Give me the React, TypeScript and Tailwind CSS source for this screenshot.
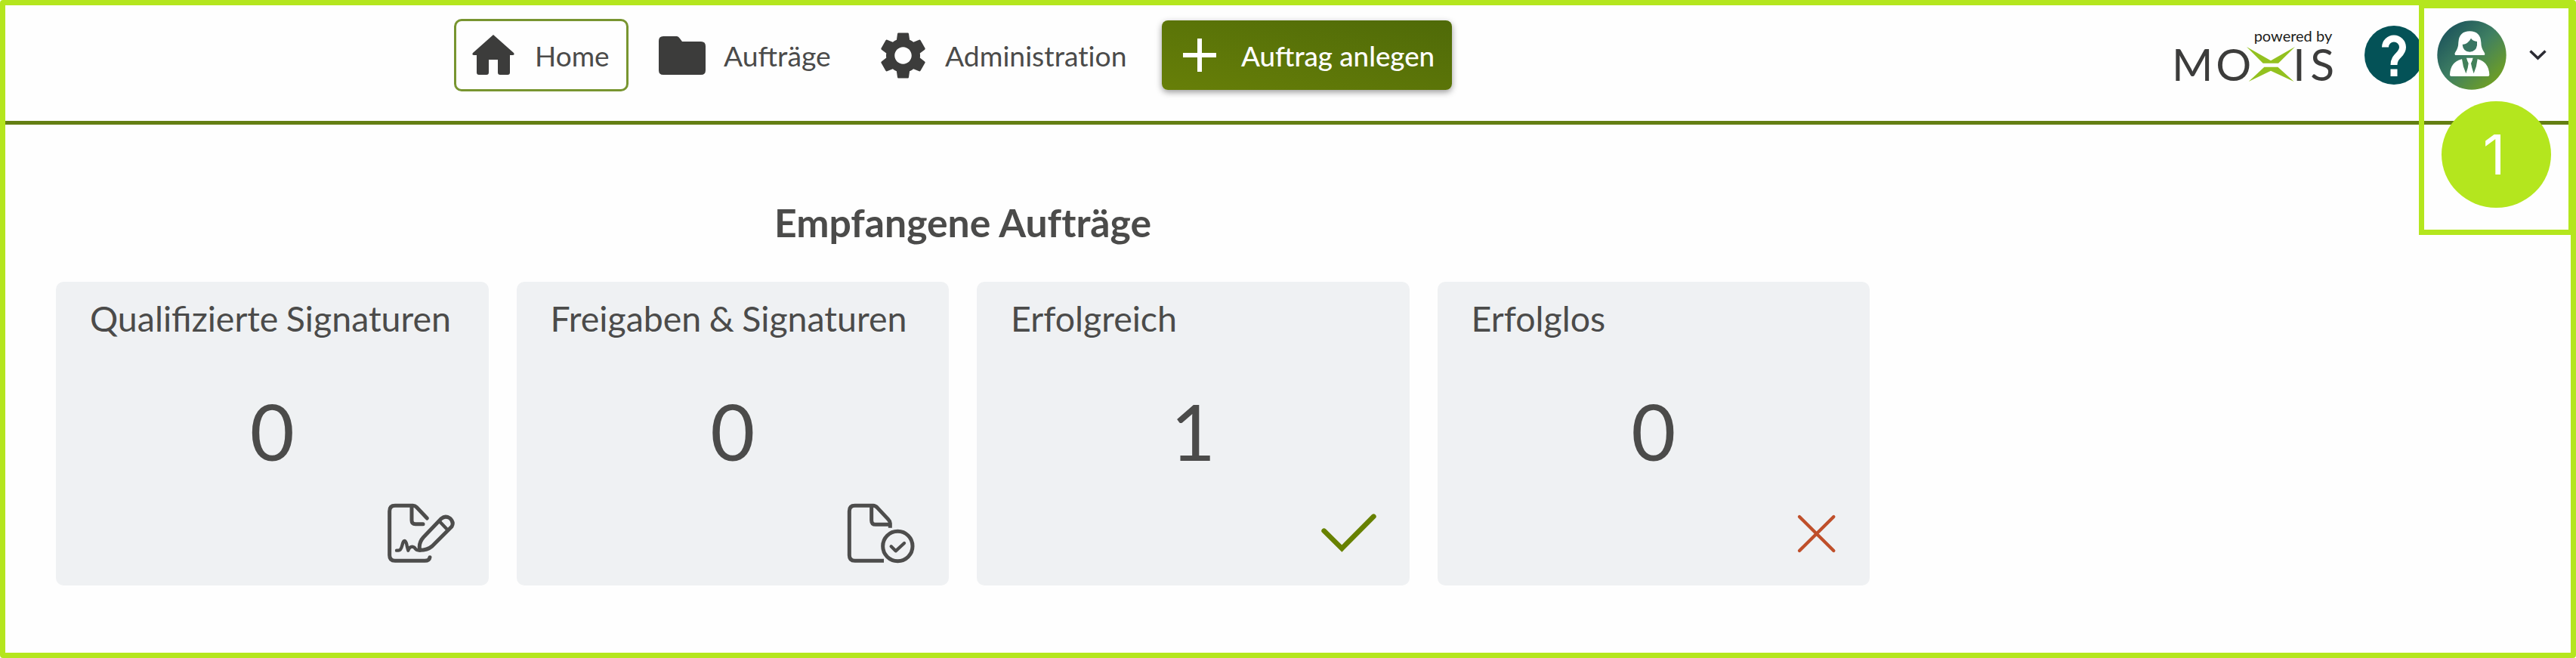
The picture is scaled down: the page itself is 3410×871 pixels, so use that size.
import React from 'react';
import { MdSettings } from 'react-icons/md';

interface StatusCard {
  title: string;
  count: number;
  icon: React.ReactNode;
}

const SignIcon = () => (
  <svg width="100" height="83" viewBox="70 75 300 249" fill="none" stroke="#4d4d4c" strokeWidth="15" strokeLinecap="round" strokeLinejoin="round">
    <path d="M254 138 L212 94 Q206 88 198 88 H127 Q105 88 105 110 V285 Q105 307 127 307 H245 Q263 307 265 293" />
    <path d="M193 92 V146 Q193 161 208 161 H238" />
    <path d="M133 266 H140 Q150 266 155 246 Q160 225 166 228 Q172 232 175 252 L179 266 Q184 251 195 251 Q204 252 208 260 Q212 266 225 266" strokeWidth="13" />
    <path d="M225 265 Q219 236 240 213 L311 139 Q326 126 345 138 Q362 154 352 171 L274 249 Q255 265 225 265 Z" />
    <path d="M303 150 L335 184" strokeWidth="13" />
  </svg>
);

const ApprovalIcon = () => (
  <svg width="100" height="83" viewBox="99 75 300 249" fill="none" stroke="#4d4d4c" strokeWidth="15" strokeLinejoin="round">
    <path d="M295 176 V158 Q295 150 288 143 L245 97 Q236 88 228 88 H155 Q133 88 133 110 V285 Q133 307 155 307 H270" />
    <path d="M221 92 V146 Q221 163 238 163 H293" />
    <circle cx="325" cy="249" r="59" />
    <path d="M299 250 L317 268 L351 237" strokeLinecap="round" strokeWidth="13" />
  </svg>
);

const SuccessIcon = () => (
  <svg width="100" height="83" viewBox="8 75 300 249" fill="none" stroke="#678100" strokeWidth="20" strokeLinecap="round">
    <path d="M97 188 L168 258 L294 131" />
  </svg>
);

const FailedIcon = () => (
  <svg width="100" height="83" viewBox="-23 75 300 249" fill="none" stroke="#bf4f2a" strokeWidth="13" strokeLinecap="round">
    <path d="M127 132 L263 267 M263 132 L127 267" />
  </svg>
);

const Logo = () => (
  <svg width="220" height="80" viewBox="45 39 660 240" className="overflow-visible font-[Lato,sans-serif]">
    <text x="371" y="105" fontSize="60" fill="#1d1d1b">powered by</text>
    <g fontSize="176" fill="#3c3c3b">
      <text x="45 220" y="260">MO</text>
      <text x="526 595" y="260">IS</text>
    </g>
    <path d="M342 126 L438 181 L534 126 L468 191 H407 Z" fill="#93c11f" />
    <path d="M350 264 L412 206 H466 L530 264 L438 221 Z" fill="#93c11f" />
  </svg>
);

const Avatar = () => (
  <svg width="92" height="92" viewBox="109 81 276 276">
    <defs>
      <linearGradient id="avatar" x1="0.1" y1="0.1" x2="0.87" y2="0.87">
        <stop offset="0" stopColor="#1c535c" />
        <stop offset="0.5" stopColor="#3f7f62" />
        <stop offset="1" stopColor="#6f9f24" />
      </linearGradient>
    </defs>
    <circle cx="247" cy="219" r="137" fill="url(#avatar)" />
    <path d="M181 219 Q177 213 182 207 Q194 190 194 168 Q197 124 239 124 Q281 124 284 168 Q284 190 296 207 Q301 213 298 219 Z" fill="#fff" />
    <path d="M210 177 Q233 174 244 152 Q252 163 268 165 V180 Q264 205 239 206 Q212 205 210 177 Z" fill="#397663" />
    <path d="M160 297 Q162 246 207 235 H271 Q315 247 317 297 Q317 303 311 303 H166 Q160 303 160 297 Z" fill="#fff" />
    <path d="M208 234 H228 L234 252 L231 270 L224 292 Q211 264 208 234 Z M270 234 H250 L244 252 L248 270 L255 292 Q267 264 270 234 Z" fill="#43805a" />
    <path d="M226 230 H252 L246 247 H232 Z" fill="#fff" />
  </svg>
);

const cards: StatusCard[] = [
  { title: 'Qualifizierte Signaturen', count: 0, icon: <SignIcon /> },
  { title: 'Freigaben & Signaturen', count: 0, icon: <ApprovalIcon /> },
  { title: 'Erfolgreich', count: 1, icon: <SuccessIcon /> },
  { title: 'Erfolglos', count: 0, icon: <FailedIcon /> },
];

export default function App() {
  return (
    <div className="relative w-[3410px] h-[871px] overflow-hidden rounded-[4px] border-[7px] border-[#b4e61e] bg-[#fefefe] font-[Lato,sans-serif] text-[#4b4b4a]">
      {/* Header */}
      <header className="flex h-[158px] items-center border-b-[5px] border-[#647f13] pb-[21px] pl-[594px] pr-[32px]">
        <nav className="flex items-center text-[37px] leading-[48px] whitespace-nowrap">
          <a className="flex h-[96px] w-[231px] items-center rounded-[10px] border-[3px] border-[#789530] pl-[21px]">
            <svg width="56" height="54" viewBox="0 0 56 54" fill="#3c3c3b">
              <path d="M28 0 L55 24 Q57 27 53 27 H50 V50 Q50 53 47 53 H37 Q34 53 34 50 V33 H22 V50 Q22 53 19 53 H9 Q6 53 6 50 V27 H3 Q-1 27 1 24 Z" />
            </svg>
            <span className="ml-[27px] pt-[2px]">Home</span>
          </a>
          <a className="ml-[40px] flex w-[286px] items-center">
            <svg width="62" height="51" viewBox="0 0 62 51" fill="#3c3c3b">
              <path d="M6 0 H24 Q26 0 28 3 L31 7 H56 Q62 7 62 13 V45 Q62 51 56 51 H6 Q0 51 0 45 V6 Q0 0 6 0 Z" />
            </svg>
            <span className="ml-[24px] pt-[2px] text-[37.3px]">Aufträge</span>
          </a>
          <a className="flex w-[380px] items-center">
            <MdSettings className="size-[75px] shrink-0 text-[#3c3c3b]" />
            <span className="ml-[18px] pt-[2px] text-[37.3px] [font-variant-ligatures:none]">Administration</span>
          </a>
          <button className="flex h-[92px] w-[384px] items-center rounded-[8px] bg-linear-to-tr from-[#677f08] to-[#4f6a08] pl-[28px] text-[36.7px] font-medium text-white shadow-[0_3px_8px_rgba(0,0,0,0.4)]">
            <svg width="44" height="44" viewBox="0 0 44 44" stroke="#fff" strokeWidth="6">
              <path d="M22 0 V44 M0 22 H44" />
            </svg>
            <span className="ml-[33px] pt-[2px]">Auftrag anlegen</span>
          </button>
        </nav>

        <div className="ml-auto flex items-center">
          <Logo />
          <svg className="ml-[35px]" width="78" height="78" viewBox="0 0 78 78">
            <circle cx="39" cy="39" r="39" fill="#045257" />
            <path d="M27.5 28.5 A11.5 11.5 0 0 1 50.5 28.5 C50.5 39 39 39 39 52" fill="none" stroke="#fff" strokeWidth="9" />
            <rect x="34.5" y="57.5" width="9" height="9.5" fill="#fff" />
          </svg>
          <div className="ml-[18px]">
            <Avatar />
          </div>
          <svg className="ml-[30px]" width="23" height="14" viewBox="0 0 23 14" fill="none" stroke="#2b2b33" strokeWidth="3.5">
            <path d="M1.5 1.5 L11.5 11 L21.5 1.5" />
          </svg>
        </div>
      </header>

      {/* Received jobs */}
      <main className="w-[2401px] ml-[67px] pt-[97px]">
        <h1 className="text-center text-[51.7px] leading-[64px] font-bold [font-variant-ligatures:none]">
          Empfangene Aufträge
        </h1>
        <div className="mt-[47px] grid grid-cols-4 gap-[37px]">
          {cards.map((card) => (
            <section key={card.title} className="flex h-[402px] flex-col rounded-[10px] bg-[#eff1f3] pt-[18px] pb-[27px]">
              <h2 className="px-[45px] text-[46.5px] leading-[60px] [word-spacing:-1.5px] whitespace-nowrap">{card.title}</h2>
              <p className="mt-[69px] text-center text-[102px] leading-[102px]">{card.count}</p>
              <div className="mt-auto flex justify-end pr-[43px]">{card.icon}</div>
            </section>
          ))}
        </div>
      </main>

      {/* Marker around the user menu */}
      <div className="absolute -top-[3px] right-[-7px] flex h-[307px] w-[208px] justify-center border-[7px] border-r-[10px] border-[#b4e61e] pt-[123px]">
        <div className="flex h-[141px] w-[145px] items-center justify-center rounded-[50%] bg-[#b4e61e] pr-[6px] font-[Inter,sans-serif] text-[73px] leading-none font-normal text-white">
          1
        </div>
      </div>
    </div>
  );
}
